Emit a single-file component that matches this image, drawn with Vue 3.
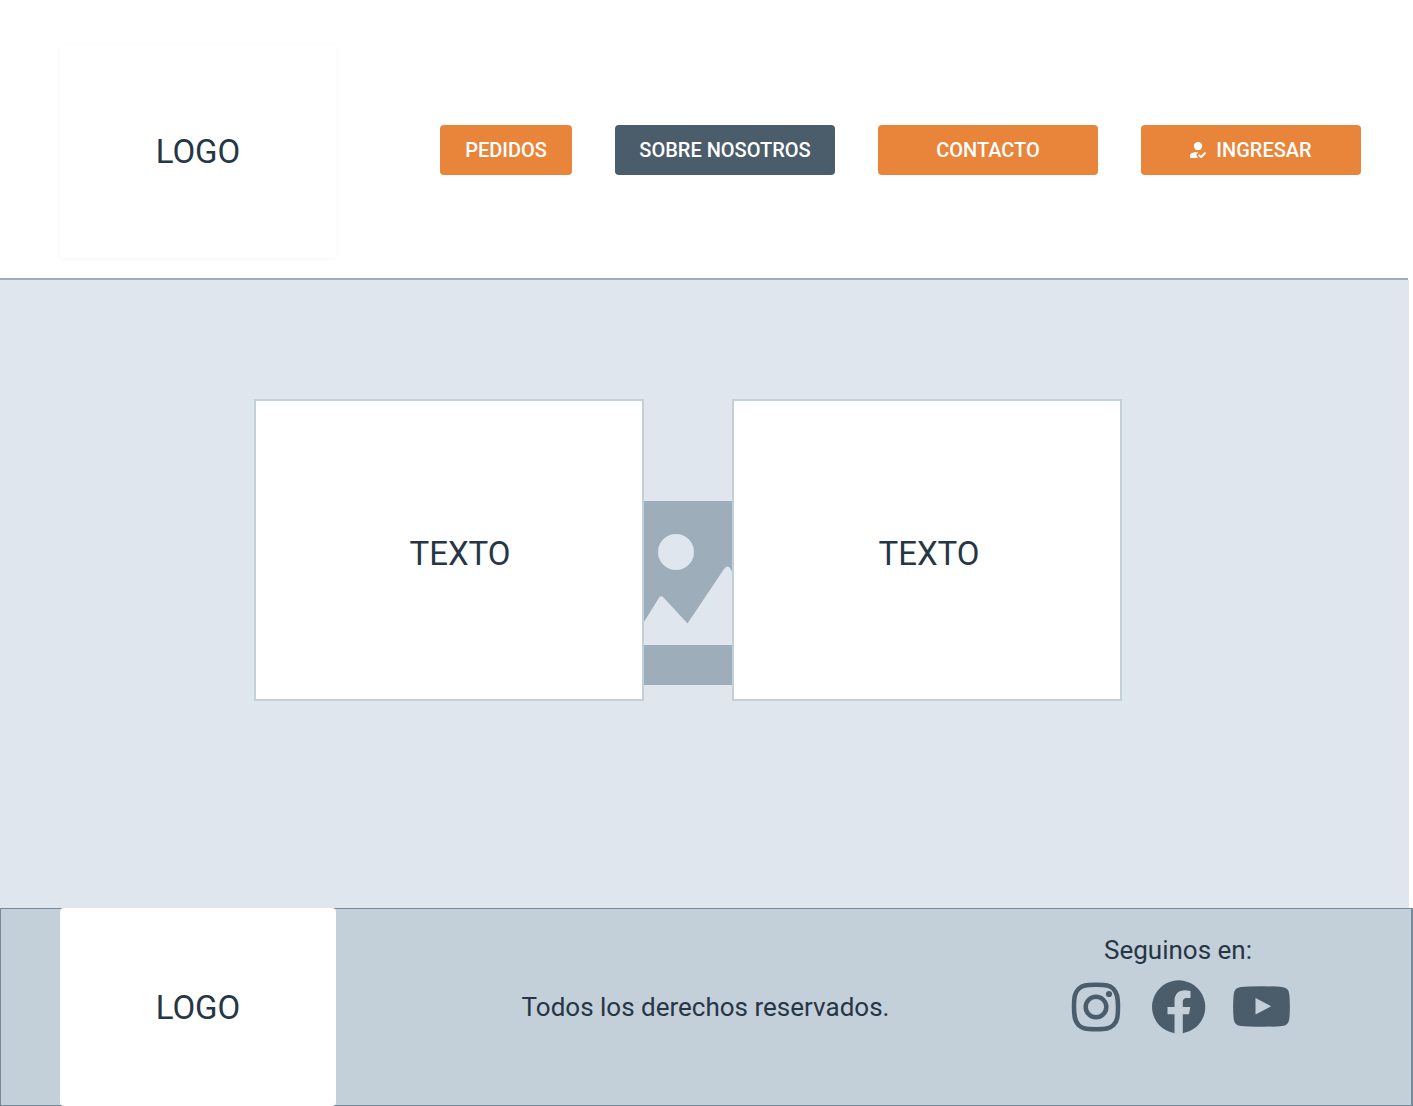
<script setup>
const sections = [
  { label: 'PEDIDOS', compact: true },
  { label: 'SOBRE NOSOTROS', active: true },
  { label: 'CONTACTO' },
  { label: 'INGRESAR', icon: true },
]
</script>

<template>
  <div class="page">
    <header class="header">
      <div class="logo header-logo">LOGO</div>
      <nav class="nav">
        <button
          v-for="item in sections"
          :key="item.label"
          type="button"
          class="nav-button"
          :class="{ compact: item.compact, active: item.active }"
        >
          <svg v-if="item.icon" class="user-icon" viewBox="0 0 16 16" aria-hidden="true">
            <circle cx="8" cy="4.1" r="4.2" fill="currentColor" />
            <path d="M0 16v-2.4c0-2.1 3-3.3 6.2-3.3H8.4L6.3 12.8 8 16z" fill="currentColor" />
            <path d="M8.7 12.9l2.3 2.2 4.6-4.6" fill="none" stroke="currentColor" stroke-width="2" />
          </svg>
          <span>{{ item.label }}</span>
        </button>
      </nav>
    </header>

    <main class="main">
      <section class="card card-first">TEXTO</section>
      <svg class="picture" viewBox="0 0 88 184" aria-hidden="true">
        <rect width="88" height="184" fill="#9eadba" />
        <circle cx="32" cy="51" r="18" fill="#dfe6ee" />
        <path
          d="M0 121L14.5 97.500Q17 93.500 20 97L43.500 122.500 80 68Q83 63.500 86 67L88 71V144H0z"
          fill="#dfe6ee"
        />
      </svg>
      <section class="card">TEXTO</section>
    </main>

    <footer class="footer">
      <div class="logo">LOGO</div>
      <p class="rights">Todos los derechos reservados.</p>
      <div class="social">
        <p class="social-title">Seguinos en:</p>
        <div class="social-links">
          <a href="#" aria-label="Instagram">
            <svg width="54" height="54" viewBox="0 0 54 54" aria-hidden="true">
              <path
                d="M25 4.800C35 4.800 39 5.300 42.500 9S47 17 47 27 46.200 41.300 42.500 45 35 49.200 25 49.200 11 48.700 7.500 45 3 37 3 27 3.800 12.700 7.500 9 15 4.800 25 4.800z"
                fill="none"
                stroke="currentColor"
                stroke-width="4.500"
              />
              <circle cx="25" cy="27" r="10.300" fill="none" stroke="currentColor" stroke-width="4.500" />
              <circle cx="38" cy="14" r="3.100" fill="currentColor" />
            </svg>
          </a>
          <a href="#" aria-label="Facebook">
            <svg width="54" height="54" viewBox="0 0 54 54" aria-hidden="true">
              <path
                d="M22.500 53.200V34.300H15.500V27H22.500V21.200C22.500 14 26.500 10.300 33 10.300Q35.500 10.300 38.500 10.900V18H35C31.700 18 30.800 19.800 30.800 22.300V27H38.300L37 34.300H30.800V53.200A26.600 26.600 0 1 0 22.500 53.200z"
                fill="currentColor"
              />
            </svg>
          </a>
          <a href="#" aria-label="YouTube">
            <svg width="58" height="54" viewBox="0 0 58 54" aria-hidden="true">
              <path
                fill-rule="evenodd"
                d="M28.500 6.300Q43 6.300 49 7Q55.500 7.500 56.300 14Q57.500 27 56.300 39Q55.500 45.500 49 46Q43 46.700 28.500 46.700T8 46Q1.500 45.500 .700 39Q-.500 27 .700 14Q1.500 7.500 8 7Q14 6.300 28.500 6.300zM22.500 18V34.500L38.200 26.300z"
                fill="currentColor"
              />
            </svg>
          </a>
        </div>
      </div>
    </footer>
  </div>
</template>

<style>
body {
  margin: 0;
  background: #fff;
}
</style>

<style scoped>
.page {
  display: flex;
  flex-direction: column;
  min-height: 100vh;
  color: #263645;
  font-family: Roboto, "Liberation Sans", sans-serif;
}

.header {
  display: flex;
  align-items: center;
  justify-content: space-between;
  margin-right: 5px;
  padding: 44px 47px 20px 60px;
  border-bottom: 2px solid #9eadba;
}

.logo {
  display: flex;
  flex: none;
  align-items: center;
  justify-content: center;
  width: 276px;
  border-radius: 4px;
  background: #fff;
  font-size: 33px;
}

.header-logo {
  height: 214px;
  box-shadow: 0 1px 4px rgba(0, 0, 0, 0.04);
}

.nav {
  display: flex;
  gap: 43px;
  padding-bottom: 2px;
}

.nav-button {
  display: flex;
  align-items: center;
  justify-content: center;
  gap: 10px;
  width: 220px;
  height: 50px;
  padding: 0;
  border: 0;
  border-radius: 4px;
  background: #e8853a;
  color: #fff;
  font: 500 20px Roboto, "Liberation Sans", sans-serif;
  cursor: pointer;
}

.compact {
  width: 132px;
}

.active {
  background: #4b5c6a;
}

.user-icon {
  width: 16px;
  height: 16px;
}

.main {
  display: flex;
  flex: 1;
  align-items: flex-start;
  margin-right: 4px;
  padding: 119px 286px 60px 254px;
  background: #dfe6ee;
}

.card {
  display: flex;
  flex: 0 1 390px;
  align-items: center;
  justify-content: center;
  box-sizing: border-box;
  height: 302px;
  padding: 6px 0 0 4px;
  border: 2px solid #c3cfd9;
  background: #fff;
  font-size: 33px;
}

.card-first {
  padding-left: 22px;
}

.picture {
  flex: none;
  width: 88px;
  height: 184px;
  margin-top: 102px;
}

.footer {
  display: flex;
  box-sizing: border-box;
  height: 198px;
  padding-right: 122px;
  padding-left: 60px;
  background: #c3cfd9;
  box-shadow: inset 1px 1px #778a9a, inset -2px -1px #778a9a;
}

.rights {
  flex: 1;
  align-self: center;
  margin: 0;
  padding-left: 4px;
  font-size: 26px;
  line-height: 32px;
  text-align: center;
}

.social {
  padding-top: 26px;
}

.social-title {
  margin: 0 0 14px;
  padding-right: 6px;
  font-size: 26px;
  line-height: 32px;
  text-align: center;
}

.social-links {
  display: flex;
  gap: 27px;
}

.social-links a {
  display: flex;
  color: #4b5c6a;
}
</style>
